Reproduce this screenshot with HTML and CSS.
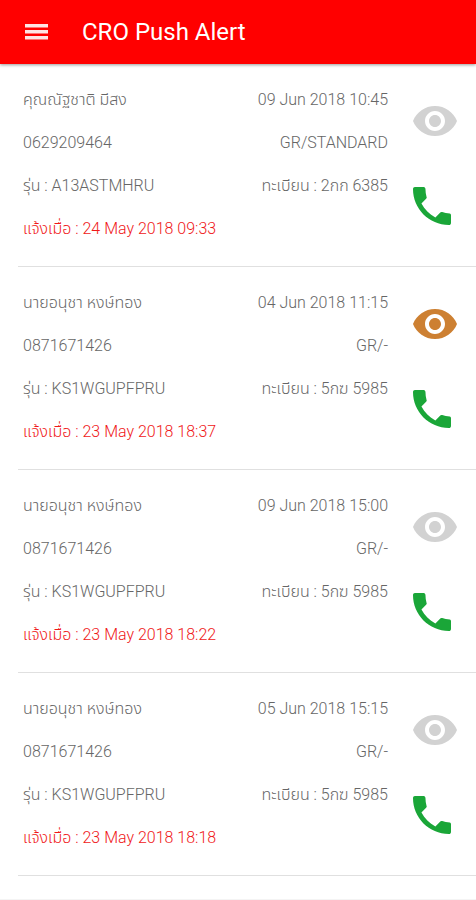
FILE: index.html
```
<!DOCTYPE html>
<html lang="th">
<head>
<meta charset="utf-8">
<meta name="viewport" content="width=device-width, initial-scale=1">
<title>CRO Push Alert</title>
<link rel="stylesheet" href="styles.css">
</head>
<body>
<svg class="sprite" aria-hidden="true">
  <symbol id="eye" viewBox="0 0 24 24"><path d="M12 4.5C7 4.5 2.73 7.61 1 12c1.73 4.39 6 7.5 11 7.5s9.27-3.11 11-7.5c-1.73-4.39-6-7.5-11-7.5zM12 17c-2.76 0-5-2.24-5-5s2.24-5 5-5 5 2.24 5 5-2.24 5-5 5zm0-8c-1.66 0-3 1.34-3 3s1.34 3 3 3 3-1.34 3-3-1.34-3-3-3z"/></symbol>
  <symbol id="phone" viewBox="3 3 18 18"><path d="M20.4 15.5c-1.3 0-2.5-.2-3.6-.6-.4-.1-.8 0-1 .3l-2.2 2.2c-2.8-1.4-5.1-3.8-6.6-6.6l2.2-2.2c.3-.3.4-.7.2-1-.3-1.1-.5-2.300-.5-3.600 0-.6-.400-1-.900-1H3.900C3.400 3 3 3.400 3 4c0 9.400 7.600 17 17 17 .6 0 1-.400 1-1v-3.500c0-.6-.200-1-.600-1z"/></symbol>
</svg>
<header class="bar">
  <button class="menu" type="button" aria-label="Menu">
    <svg viewBox="0 0 23 18" aria-hidden="true"><path d="M0 1h23v3.500H0zM0 7h23v3.500H0zM0 13h23v3.500H0z"/></svg>
  </button>
  <h1 class="title">CRO Push Alert</h1>
</header>
<main class="list">
  <article class="item">
    <div class="info">
      <p class="line"><span>คุณณัฐชาติ มีสง</span><span>09 Jun 2018 10:45</span></p>
      <p class="line"><span>0629209464</span><span>GR/STANDARD</span></p>
      <p class="line"><span>รุ่น : A13ASTMHRU</span><span>ทะเบียน : 2กก 6385</span></p>
      <p class="line alert"><span>แจ้งเมื่อ : 24 May 2018 09:33</span></p>
    </div>
    <div class="actions">
      <button class="view" type="button" aria-label="View"><svg><use href="#eye"/></svg></button>
      <button class="call" type="button" aria-label="Call"><svg><use href="#phone"/></svg></button>
    </div>
  </article>
  <article class="item">
    <div class="info">
      <p class="line"><span>นายอนุชา หงษ์ทอง</span><span>04 Jun 2018 11:15</span></p>
      <p class="line"><span>0871671426</span><span>GR/-</span></p>
      <p class="line"><span>รุ่น : KS1WGUPFPRU</span><span>ทะเบียน : 5กฆ 5985</span></p>
      <p class="line alert"><span>แจ้งเมื่อ : 23 May 2018 18:37</span></p>
    </div>
    <div class="actions">
      <button class="view unread" type="button" aria-label="View"><svg><use href="#eye"/></svg></button>
      <button class="call" type="button" aria-label="Call"><svg><use href="#phone"/></svg></button>
    </div>
  </article>
  <article class="item">
    <div class="info">
      <p class="line"><span>นายอนุชา หงษ์ทอง</span><span>09 Jun 2018 15:00</span></p>
      <p class="line"><span>0871671426</span><span>GR/-</span></p>
      <p class="line"><span>รุ่น : KS1WGUPFPRU</span><span>ทะเบียน : 5กฆ 5985</span></p>
      <p class="line alert"><span>แจ้งเมื่อ : 23 May 2018 18:22</span></p>
    </div>
    <div class="actions">
      <button class="view" type="button" aria-label="View"><svg><use href="#eye"/></svg></button>
      <button class="call" type="button" aria-label="Call"><svg><use href="#phone"/></svg></button>
    </div>
  </article>
  <article class="item">
    <div class="info">
      <p class="line"><span>นายอนุชา หงษ์ทอง</span><span>05 Jun 2018 15:15</span></p>
      <p class="line"><span>0871671426</span><span>GR/-</span></p>
      <p class="line"><span>รุ่น : KS1WGUPFPRU</span><span>ทะเบียน : 5กฆ 5985</span></p>
      <p class="line alert"><span>แจ้งเมื่อ : 23 May 2018 18:18</span></p>
    </div>
    <div class="actions">
      <button class="view" type="button" aria-label="View"><svg><use href="#eye"/></svg></button>
      <button class="call" type="button" aria-label="Call"><svg><use href="#phone"/></svg></button>
    </div>
  </article>
</main>
</body>
</html>
```
FILE: styles.css
```
* {
  box-sizing: border-box;
}

body {
  display: flex;
  flex-direction: column;
  min-height: 100vh;
  margin: 0;
  border-bottom: 1px solid #f4f4f4;
  background: #fff;
  color: #666;
  font-family: Roboto, "Noto Sans", "Noto Sans Thai", sans-serif;
  font-size: 16px;
  font-weight: 300;
}

button {
  display: block;
  padding: 0;
  border: 0;
  background: none;
  cursor: pointer;
}

svg {
  display: block;
  width: 100%;
  height: 100%;
  fill: currentColor;
}

.sprite {
  display: none;
}

.bar {
  display: flex;
  align-items: center;
  gap: 34px;
  height: 64px;
  padding: 0 25px;
  background: #f00;
  color: #fff;
  box-shadow: 0 1px 3px rgba(0, 0, 0, 0.4);
}

.menu {
  width: 23px;
  height: 18px;
  color: #ffe4e4;
}

.title {
  margin: 0;
  font-size: 24px;
  font-weight: 400;
  line-height: 32px;
}

.item {
  display: flex;
  gap: 25px;
  margin-left: 18px;
  padding: 14px 19px 16px 5px;
  border-bottom: 1px solid #e0e0e0;
}

.info {
  flex: 1;
}

.line {
  display: flex;
  justify-content: space-between;
  height: 43px;
  margin: 0;
  line-height: 43px;
  white-space: nowrap;
}

.alert {
  color: #f01818;
}

.actions {
  display: flex;
  flex-direction: column;
  gap: 42px;
  width: 44px;
  padding-top: 19px;
}

.view {
  width: 44px;
  height: 48px;
  color: #d2d2d2;
}

.view svg {
  width: 48px;
  height: 48px;
  margin-left: -2px;
}

.unread {
  color: #cd8032;
}

.call {
  width: 38px;
  height: 38px;
  color: #1aa638;
}
```
